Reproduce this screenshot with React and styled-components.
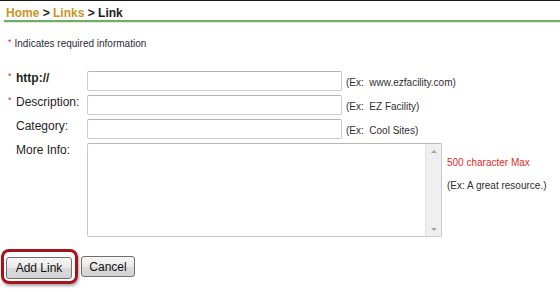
import React from "react";
import styled, { createGlobalStyle } from "styled-components";

const GlobalStyle = createGlobalStyle`
  html, body { margin: 0; padding: 0; background: #fff; }
  body { font-family: "Liberation Sans", Arial, sans-serif; }
`;

const Page = styled.div`
  width: 560px;
  height: 292px;
  box-sizing: border-box;
  border-top: 1px solid #1a1a1a;
  overflow: hidden;
  background: #fff;
`;

const Breadcrumb = styled.div`
  margin-left: 4px;
  padding: 5px 0 0 2px;
  font-size: 12px;
  font-weight: bold;
  line-height: 14px;
  color: #1e1e1e;
  border-bottom: 2px solid #72ad62;
  box-shadow: 0 1px 0 #dcecd6;
`;

const Crumb = styled.span`
  color: #c8951f;
`;

const Note = styled.div`
  margin: 16px 0 0 8px;
  font-size: 10px;
  line-height: 12px;
  color: #2a2a3a;
`;

const Star = styled.span`
  display: inline-block;
  color: #e41f1f;
  font-size: 9px;
  line-height: 8px;
  vertical-align: top;
  margin-right: 3px;
`;

const Form = styled.div`
  margin-top: 21px;
  display: flex;
  flex-direction: column;
  gap: 4px;
`;

const Row = styled.div`
  display: flex;
  align-items: flex-start;
  padding-left: 8px;
`;

const Marker = styled.span`
  width: 8px;
  color: #e41f1f;
  font-size: 9px;
  line-height: 9px;
  padding-top: 1px;
`;

const Label = styled.label`
  width: 71px;
  font-size: 12px;
  line-height: 14px;
  color: #1e1e1e;
  font-weight: ${(p) => (p.$bold ? "bold" : "normal")};
`;

const TextInput = styled.input`
  box-sizing: border-box;
  width: 255px;
  height: 20px;
  margin: 0;
  padding: 1px 3px;
  border: 1px solid #cbcbcb;
  border-top-color: #b4b4b4;
  border-radius: 2px;
  background: #fff;
  font: 12px "Liberation Sans", Arial, sans-serif;
`;

const Hint = styled.span`
  margin-left: 4px;
  padding-top: 6px;
  font-size: 10px;
  line-height: 12px;
  color: #2e2e2e;
  white-space: pre;
`;

const AreaBox = styled.div`
  box-sizing: border-box;
  width: 355px;
  height: 94px;
  display: flex;
  border: 1px solid #c9c9c9;
  border-top-color: #b6b6b6;
  border-radius: 2px;
  background: #fff;
`;

const TextArea = styled.textarea`
  flex: 1;
  border: none;
  outline: none;
  resize: none;
  margin: 0;
  padding: 2px 3px;
  font: 12px "Liberation Sans", Arial, sans-serif;
  background: transparent;
`;

const Scrollbar = styled.div`
  width: 15px;
  background: #efefef;
  border-left: 1px solid #e2e2e2;
  display: flex;
  flex-direction: column;
  justify-content: space-between;
  align-items: center;
  padding: 6px 0 5px;
`;

const Arrow = styled.span`
  width: 0;
  height: 0;
  border-left: 3px solid transparent;
  border-right: 3px solid transparent;
  ${(p) =>
    p.$down
      ? "border-top: 3px solid #a3a3a3;"
      : "border-bottom: 3px solid #a3a3a3;"}
`;

const SideNotes = styled.div`
  margin-left: 5px;
  padding-top: 14px;
  display: flex;
  flex-direction: column;
  gap: 11px;
  font-size: 10px;
  line-height: 12px;
  color: #2e2e2e;
`;

const Limit = styled.span`
  color: #e42a2a;
`;

const Actions = styled.div`
  margin-top: 12px;
  padding-left: 1px;
  display: flex;
  align-items: center;
  gap: 3px;
`;

const Highlight = styled.span`
  display: inline-flex;
  border: 3px solid #a3141c;
  border-radius: 8px;
  padding: 5px 3px 2px 2px;
  box-shadow: 1px 2px 3px rgba(0, 0, 0, 0.35);
`;

const Button = styled.button`
  box-sizing: border-box;
  width: ${(p) => p.$w}px;
  height: ${(p) => p.$h}px;
  margin: 0;
  padding: 0;
  border: 1px solid #707070;
  border-radius: 3px;
  background: linear-gradient(#f7f7f7, #e9e9e9 50%, #dadada 51%, #d4d4d4);
  font: 12px "Liberation Sans", Arial, sans-serif;
  color: #111;
`;

const fields = [
  { label: "http://", req: true, bold: true, hint: "(Ex:  www.ezfacility.com)" },
  { label: "Description:", req: true, hint: "(Ex:  EZ Facility)" },
  { label: "Category:", req: false, hint: "(Ex:  Cool Sites)" },
];

export default function App() {
  return (
    <>
      <GlobalStyle />
      <Page>
        <Breadcrumb>
          <Crumb>Home</Crumb> &gt; <Crumb>Links</Crumb> &gt; Link
        </Breadcrumb>
        <Note>
          <Star>*</Star>Indicates required information
        </Note>
        <Form>
          {fields.map((f) => (
            <Row key={f.label}>
              <Marker>{f.req ? "*" : ""}</Marker>
              <Label $bold={f.bold}>{f.label}</Label>
              <TextInput type="text" />
              <Hint>{f.hint}</Hint>
            </Row>
          ))}
          <Row>
            <Marker />
            <Label>More Info:</Label>
            <AreaBox>
              <TextArea />
              <Scrollbar>
                <Arrow />
                <Arrow $down />
              </Scrollbar>
            </AreaBox>
            <SideNotes>
              <Limit>500 character Max</Limit>
              <span>(Ex: A great resource.)</span>
            </SideNotes>
          </Row>
        </Form>
        <Actions>
          <Highlight>
            <Button $w={66} $h={22}>Add Link</Button>
          </Highlight>
          <Button $w={54} $h={21}>Cancel</Button>
        </Actions>
      </Page>
    </>
  );
}
